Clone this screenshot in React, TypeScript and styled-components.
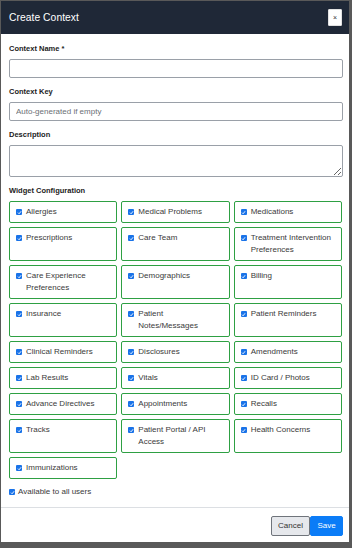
import React, { FC } from 'react';
import styled, { createGlobalStyle } from 'styled-components';

const GlobalStyle = createGlobalStyle`
  html, body {
    margin: 0;
    padding: 0;
    background: #595959;
    font-family: 'Liberation Sans', Arial, sans-serif;
  }
`;

const widgets = [
  'Allergies',
  'Medical Problems',
  'Medications',
  'Prescriptions',
  'Care Team',
  'Treatment Intervention Preferences',
  'Care Experience Preferences',
  'Demographics',
  'Billing',
  'Insurance',
  'Patient Notes/Messages',
  'Patient Reminders',
  'Clinical Reminders',
  'Disclosures',
  'Amendments',
  'Lab Results',
  'Vitals',
  'ID Card / Photos',
  'Advance Directives',
  'Appointments',
  'Recalls',
  'Tracks',
  'Patient Portal / API Access',
  'Health Concerns',
  'Immunizations',
];

const Modal = styled.div`
  margin: 1px 0 0 1px;
  width: 348px;
  background: #ffffff;
  display: flex;
  flex-direction: column;
`;

const Header = styled.div`
  height: 33px;
  background: #1f2837;
  display: flex;
  align-items: center;
  justify-content: space-between;
  padding: 0 7px 0 8px;
`;

const Title = styled.div`
  color: #ffffff;
  font-size: 10.3px;
  letter-spacing: 0.05px;
`;

const CloseButton = styled.button`
  width: 14px;
  height: 17px;
  padding: 0;
  background: #ffffff;
  border: 1px solid #e2e2e2;
  border-radius: 1px;
  font-size: 7px;
  line-height: 1;
  color: #333;
  font-family: inherit;
  display: flex;
  align-items: center;
  justify-content: center;
`;

const Body = styled.div`
  padding: 10px 6px 10px 8px;
  display: flex;
  flex-direction: column;
`;

const Field = styled.div`
  display: flex;
  flex-direction: column;
  margin-bottom: 9px;
`;

const Label = styled.label`
  font-size: 7.5px;
  line-height: 10px;
  font-weight: bold;
  color: #222;
  margin-bottom: 5px;
`;

const TextInput = styled.input`
  box-sizing: border-box;
  height: 19px;
  width: 100%;
  border: 1px solid #9aa0a8;
  border-radius: 2px;
  padding: 0 6px;
  font-family: inherit;
  font-size: 8px;
  color: #333;
  outline: none;

  &::placeholder {
    color: #6b6f75;
  }
`;

const TextArea = styled.textarea`
  box-sizing: border-box;
  height: 32px;
  width: 100%;
  border: 1px solid #9aa0a8;
  border-radius: 2px;
  padding: 4px 6px;
  font-family: inherit;
  font-size: 8px;
  display: block;
  outline: none;
`;

const WidgetGrid = styled.div`
  display: grid;
  grid-template-columns: repeat(3, 1fr);
  gap: 4px;
  margin-right: 1px;
`;

const WidgetItem = styled.label`
  border: 1px solid #2ea043;
  border-radius: 2px;
  padding: 4px 6px;
  display: flex;
  align-items: flex-start;
  gap: 4px;
  font-size: 8px;
  line-height: 12px;
  color: #3a3a3a;
`;

const Check = styled.span<{ $mt?: number }>`
  flex: none;
  width: 6px;
  height: 6px;
  margin-top: ${(p) => p.$mt ?? 3}px;
  background: #1a73e8;
  border-radius: 1px;
  display: flex;
  align-items: center;
  justify-content: center;
`;

const AllUsers = styled.label`
  margin-top: 8px;
  display: flex;
  align-items: flex-start;
  gap: 3px;
  font-size: 8px;
  line-height: 10px;
  color: #3a3a3a;
`;

const Footer = styled.div`
  border-top: 1px solid #dcdfe3;
  height: 34px;
  display: flex;
  align-items: center;
  justify-content: flex-end;
  padding: 0 6px 0 8px;
`;

const Button = styled.button<{ $primary?: boolean }>`
  height: 20px;
  width: ${(p) => (p.$primary ? 33 : 39)}px;
  padding: 0;
  font-family: inherit;
  font-size: 8px;
  border-radius: 2px;
  border: 1px solid ${(p) => (p.$primary ? '#0b7cf7' : '#6f747b')};
  background: ${(p) => (p.$primary ? '#0b7cf7' : '#e6e8ec')};
  color: ${(p) => (p.$primary ? '#ffffff' : '#333')};
  margin-top: 1px;
`;

const Tick: FC = () => (
  <svg width="5" height="5" viewBox="0 0 10 10">
    <path d="M2 5.3 L4.2 7.5 L8.2 2.5" fill="none" stroke="#fff" strokeWidth="1.8" />
  </svg>
);

export default function App() {
  return (
    <>
      <GlobalStyle />
      <Modal>
        <Header>
          <Title>Create Context</Title>
          <CloseButton>×</CloseButton>
        </Header>
        <Body>
          <Field>
            <Label>Context Name *</Label>
            <TextInput />
          </Field>
          <Field>
            <Label>Context Key</Label>
            <TextInput placeholder="Auto-generated if empty" />
          </Field>
          <Field>
            <Label>Description</Label>
            <TextArea />
          </Field>
          <Label>Widget Configuration</Label>
          <WidgetGrid>
            {widgets.map((w) => (
              <WidgetItem key={w}>
                <Check>
                  <Tick />
                </Check>
                <span>{w}</span>
              </WidgetItem>
            ))}
          </WidgetGrid>
          <AllUsers>
            <Check $mt={2}>
              <Tick />
            </Check>
            <span>Available to all users</span>
          </AllUsers>
        </Body>
        <Footer>
          <Button>Cancel</Button>
          <Button $primary>Save</Button>
        </Footer>
      </Modal>
    </>
  );
}
